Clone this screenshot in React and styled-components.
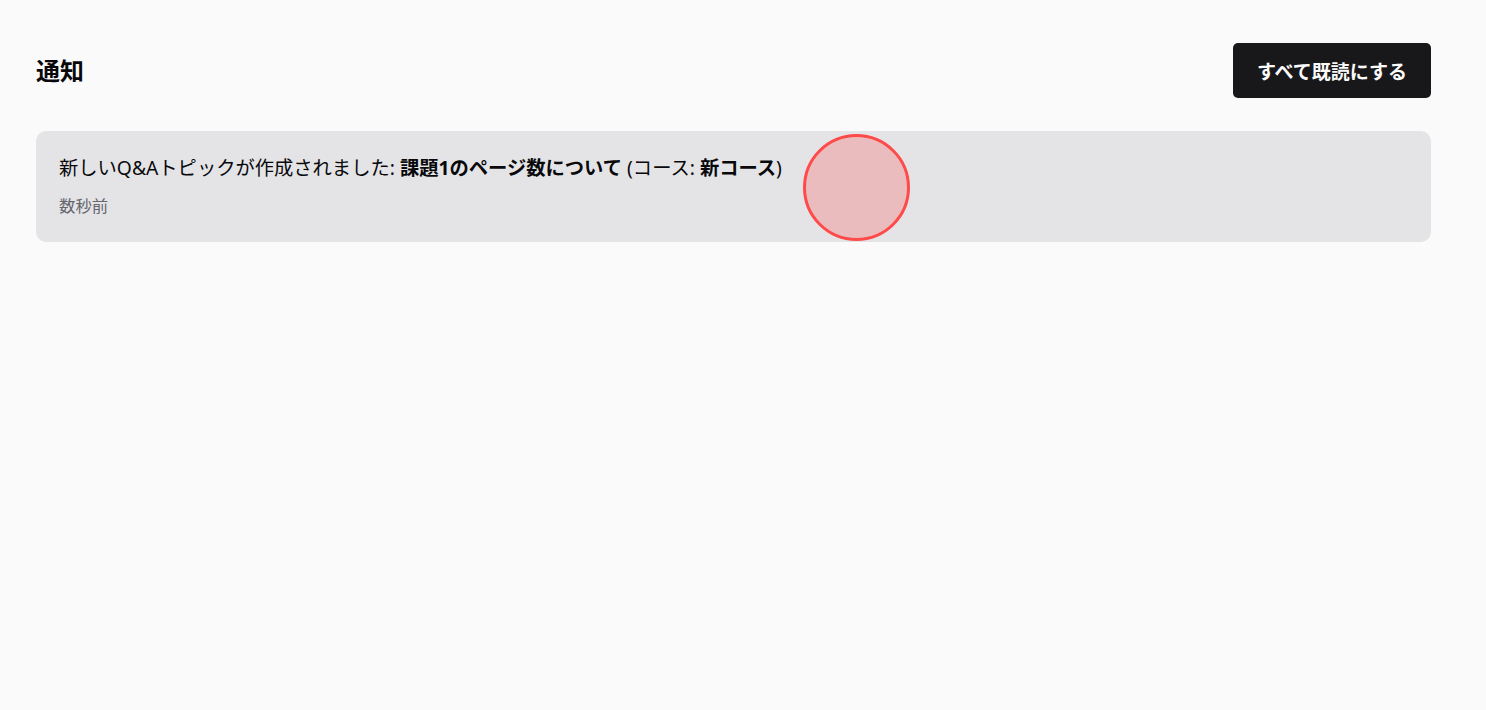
import React from 'react';
import styled, { createGlobalStyle } from 'styled-components';

const GlobalStyle = createGlobalStyle`
  html, body {
    margin: 0;
    padding: 0;
    background: #fafafa;
  }
  body {
    font-family: "Noto Sans", "Noto Sans CJK JP", sans-serif;
    color: #09090b;
  }
`;

const Page = styled.div`
  min-height: 710px;
  box-sizing: border-box;
  padding: 43px 55px 0 36px;
`;

const Header = styled.div`
  display: flex;
  align-items: center;
  justify-content: space-between;
  margin-bottom: 33px;
`;

const Title = styled.h1`
  margin: 0;
  font-size: 24px;
  font-weight: 700;
  line-height: 1.3;
`;

const ReadAllButton = styled.button`
  height: 55px;
  padding: 0 24px;
  border: none;
  border-radius: 5px;
  background: #18181b;
  color: #fafafa;
  font-family: inherit;
  font-size: 19px;
  font-weight: 600;
  cursor: pointer;
`;

const List = styled.div`
  display: flex;
  flex-direction: column;
  gap: 12px;
`;

const Card = styled.div`
  background: ${(p) => (p.$unread ? '#e4e4e7' : '#ffffff')};
  border-radius: 10px;
  padding: 23px 23px 24px;
`;

const Message = styled.p`
  margin: 0;
  font-size: 19.3px;
  line-height: 28px;
  color: #09090b;

  strong {
    font-weight: 700;
  }
`;

const Time = styled.p`
  margin: 12px 0 0;
  font-size: 16.4px;
  line-height: 24px;
  color: #66666e;
`;

// click marker drawn over the page
const ClickMarker = styled.div`
  position: fixed;
  left: ${(p) => p.$x - 53}px;
  top: ${(p) => p.$y - 53}px;
  width: 107px;
  height: 107px;
  box-sizing: border-box;
  border-radius: 50%;
  border: 3px solid #ff4a4a;
  background: rgba(255, 68, 68, 0.25);
  pointer-events: none;
`;

const notifications = [
  {
    id: 1,
    topic: '課題1のページ数について',
    course: '新コース',
    time: '数秒前',
    unread: true
  }
];

export default function App() {
  return (
    <>
      <GlobalStyle />
      <Page>
        <Header>
          <Title>通知</Title>
          <ReadAllButton>すべて既読にする</ReadAllButton>
        </Header>
        <List>
          {notifications.map((n) => (
            <Card key={n.id} $unread={n.unread}>
              <Message>
                新しいQ&Aトピックが作成されました: <strong>{n.topic}</strong> (コース: <strong>{n.course}</strong>)
              </Message>
              <Time>{n.time}</Time>
            </Card>
          ))}
        </List>
      </Page>
      <ClickMarker $x={856} $y={187} />
    </>
  );
}
